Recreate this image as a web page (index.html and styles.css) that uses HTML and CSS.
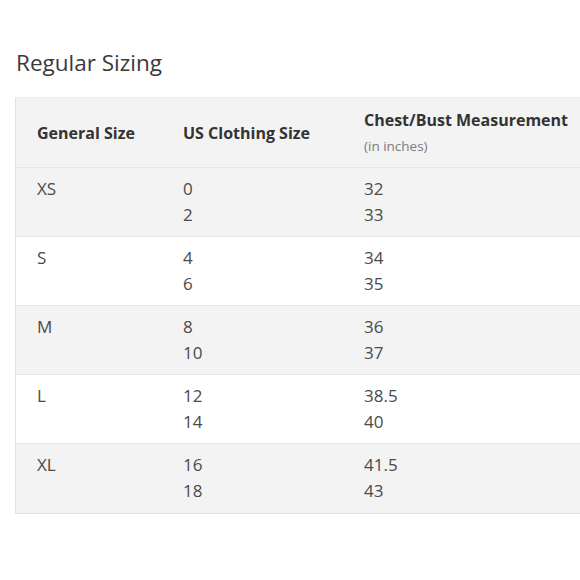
FILE: index.html
```html
<!DOCTYPE html>
<html>
<head>
<meta charset="utf-8">
<link rel="stylesheet" href="styles.css">
</head>
<body>
<h1 class="title">Regular Sizing</h1>
<div class="table">
  <div class="row head">
    <div class="cell c1">General Size</div>
    <div class="cell c2">US Clothing Size</div>
    <div class="cell c3">Chest/Bust Measurement<span class="sub">(in inches)</span></div>
  </div>
  <div class="row gray">
    <div class="cell c1">XS</div>
    <div class="cell c2">0<br>2</div>
    <div class="cell c3">32<br>33</div>
  </div>
  <div class="row">
    <div class="cell c1">S</div>
    <div class="cell c2">4<br>6</div>
    <div class="cell c3">34<br>35</div>
  </div>
  <div class="row gray">
    <div class="cell c1">M</div>
    <div class="cell c2">8<br>10</div>
    <div class="cell c3">36<br>37</div>
  </div>
  <div class="row">
    <div class="cell c1">L</div>
    <div class="cell c2">12<br>14</div>
    <div class="cell c3">38.5<br>40</div>
  </div>
  <div class="row gray last">
    <div class="cell c1">XL</div>
    <div class="cell c2">16<br>18</div>
    <div class="cell c3">41.5<br>43</div>
  </div>
</div>
</body>
</html>
```
FILE: styles.css
```css
html, body {
  margin: 0;
  padding: 0;
  background: #fff;
  overflow: hidden;
}
body {
  font-family: "Open Sans", "Noto Sans", sans-serif;
  color: #4a4a4a;
  width: 580px;
  height: 580px;
}
.title {
  margin: 0;
  padding: 48px 0 0 16px;
  font-size: 22.5px;
  font-weight: 400;
  line-height: 30px;
  color: #3a3a3a;
}
.table {
  margin: 19px 0 0 15px;
  width: 565px;
  border-left: 1px solid #e2e2e2;
  border-top: 1px solid #ececec;
  border-bottom: 1px solid #e2e2e2;
}
.row {
  display: grid;
  grid-template-columns: 146px 181px 1fr;
  height: 69px;
  box-sizing: border-box;
  border-bottom: 1px solid #e6e6e6;
  background: #fff;
  font-size: 17px;
  line-height: 26px;
}
.row.last { border-bottom: none; }
.row.gray { background: #f3f3f3; }
.row.head {
  background: #f3f3f3;
  height: 70px;
  align-items: center;
  font-weight: 700;
  font-size: 16px;
  color: #333;
}
.cell { padding-left: 21px; white-space: nowrap; }
.row:not(.head) .cell { padding-top: 8px; }
.head .c3 { padding-top: 2px; line-height: 24px; }
.sub {
  display: block;
  font-size: 13.5px;
  font-weight: 400;
  color: #7a7a7a;
  line-height: 28px;
}
```
